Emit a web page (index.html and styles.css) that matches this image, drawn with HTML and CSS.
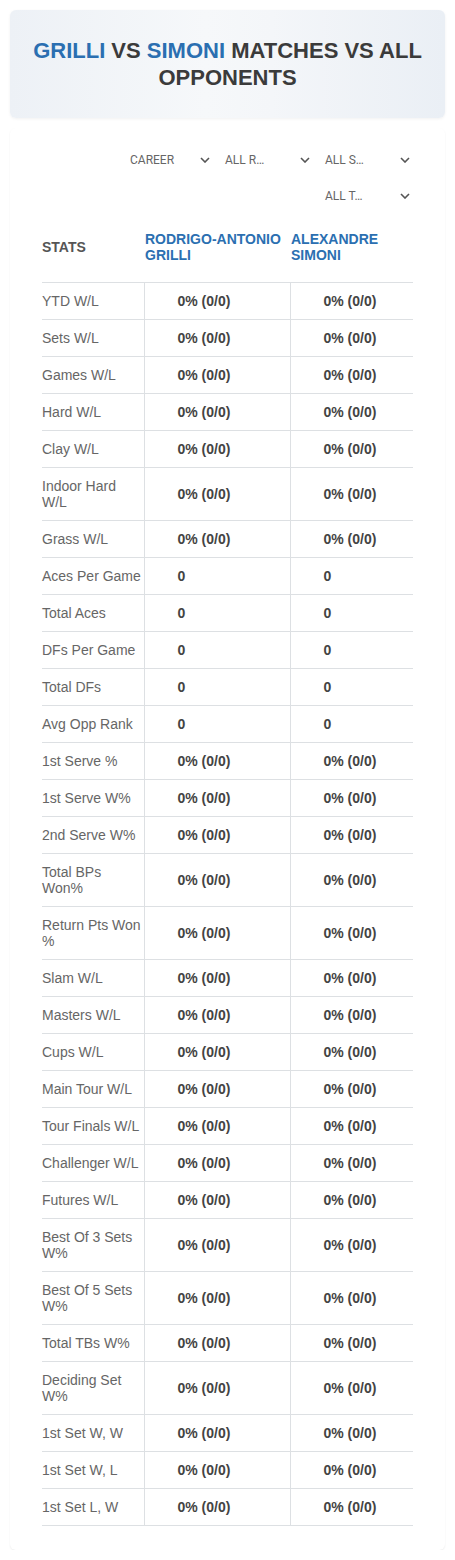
FILE: index.html
```html
<!DOCTYPE html>
<html>
<head>
<meta charset="utf-8">
<link rel="stylesheet" href="styles.css">
</head>
<body>
<header class="hero">
  <h1 class="title"><span class="name">Grilli</span> vs <span class="name">Simoni</span> Matches vs All Opponents</h1>
</header>
<section class="card">
  <div class="filters">
    <div class="select"><span>CAREER</span><svg class="chev" viewBox="0 0 10 6"><path d="M1 1l4 4 4-4" fill="none" stroke="#555" stroke-width="1.6"/></svg></div>
    <div class="select"><span>ALL R…</span><svg class="chev" viewBox="0 0 10 6"><path d="M1 1l4 4 4-4" fill="none" stroke="#555" stroke-width="1.6"/></svg></div>
    <div class="select"><span>ALL S…</span><svg class="chev" viewBox="0 0 10 6"><path d="M1 1l4 4 4-4" fill="none" stroke="#555" stroke-width="1.6"/></svg></div>
    <div class="select"><span>ALL T…</span><svg class="chev" viewBox="0 0 10 6"><path d="M1 1l4 4 4-4" fill="none" stroke="#555" stroke-width="1.6"/></svg></div>
  </div>
  <table class="stats">
    <colgroup><col class="c1"><col class="c2"><col class="c3"></colgroup>
    <thead>
      <tr><th class="lbl">STATS</th><th class="pl">RODRIGO-ANTONIO GRILLI</th><th class="pl">ALEXANDRE SIMONI</th></tr>
    </thead>
    <tbody>
      <tr><td>YTD W/L</td><td>0% (0/0)</td><td>0% (0/0)</td></tr>
      <tr><td>Sets W/L</td><td>0% (0/0)</td><td>0% (0/0)</td></tr>
      <tr><td>Games W/L</td><td>0% (0/0)</td><td>0% (0/0)</td></tr>
      <tr><td>Hard W/L</td><td>0% (0/0)</td><td>0% (0/0)</td></tr>
      <tr><td>Clay W/L</td><td>0% (0/0)</td><td>0% (0/0)</td></tr>
      <tr><td>Indoor Hard W/L</td><td>0% (0/0)</td><td>0% (0/0)</td></tr>
      <tr><td>Grass W/L</td><td>0% (0/0)</td><td>0% (0/0)</td></tr>
      <tr><td>Aces Per Game</td><td>0</td><td>0</td></tr>
      <tr><td>Total Aces</td><td>0</td><td>0</td></tr>
      <tr><td>DFs Per Game</td><td>0</td><td>0</td></tr>
      <tr><td>Total DFs</td><td>0</td><td>0</td></tr>
      <tr><td>Avg Opp Rank</td><td>0</td><td>0</td></tr>
      <tr><td>1st Serve %</td><td>0% (0/0)</td><td>0% (0/0)</td></tr>
      <tr><td>1st Serve W%</td><td>0% (0/0)</td><td>0% (0/0)</td></tr>
      <tr><td>2nd Serve W%</td><td>0% (0/0)</td><td>0% (0/0)</td></tr>
      <tr><td>Total BPs Won%</td><td>0% (0/0)</td><td>0% (0/0)</td></tr>
      <tr><td>Return Pts Won %</td><td>0% (0/0)</td><td>0% (0/0)</td></tr>
      <tr><td>Slam W/L</td><td>0% (0/0)</td><td>0% (0/0)</td></tr>
      <tr><td>Masters W/L</td><td>0% (0/0)</td><td>0% (0/0)</td></tr>
      <tr><td>Cups W/L</td><td>0% (0/0)</td><td>0% (0/0)</td></tr>
      <tr><td>Main Tour W/L</td><td>0% (0/0)</td><td>0% (0/0)</td></tr>
      <tr><td>Tour Finals W/L</td><td>0% (0/0)</td><td>0% (0/0)</td></tr>
      <tr><td>Challenger W/L</td><td>0% (0/0)</td><td>0% (0/0)</td></tr>
      <tr><td>Futures W/L</td><td>0% (0/0)</td><td>0% (0/0)</td></tr>
      <tr><td>Best Of 3 Sets W%</td><td>0% (0/0)</td><td>0% (0/0)</td></tr>
      <tr><td>Best Of 5 Sets W%</td><td>0% (0/0)</td><td>0% (0/0)</td></tr>
      <tr><td>Total TBs W%</td><td>0% (0/0)</td><td>0% (0/0)</td></tr>
      <tr><td>Deciding Set W%</td><td>0% (0/0)</td><td>0% (0/0)</td></tr>
      <tr><td>1st Set W, W</td><td>0% (0/0)</td><td>0% (0/0)</td></tr>
      <tr><td>1st Set W, L</td><td>0% (0/0)</td><td>0% (0/0)</td></tr>
      <tr><td>1st Set L, W</td><td>0% (0/0)</td><td>0% (0/0)</td></tr>
    </tbody>
  </table>
</section>
</body>
</html>
```
FILE: styles.css
```css
* { box-sizing: border-box; }
body {
  margin: 0;
  padding: 10px 10px 0;
  background: #fff;
  font-family: "Liberation Sans", Arial, sans-serif;
}
.hero {
  height: 108px;
  border-radius: 6px;
  background: linear-gradient(90deg, #edf1f6 0%, #f6f8fa 45%, #f4f6f9 60%, #eaeff5 100%);
  box-shadow: 0 1px 3px rgba(0,0,0,0.06);
  display: flex;
  align-items: center;
  justify-content: center;
  padding: 0 14px;
}
.title {
  margin: 0;
  text-align: center;
  font-size: 22px;
  line-height: 27px;
  font-weight: 700;
  text-transform: uppercase;
  color: #3b3b3b;
}
.name { color: #2b6fb1; }
.card {
  margin-top: 10px;
  padding: 17px 32px 24px;
  border-radius: 6px;
  box-shadow: 0 1px 2px rgba(0,0,0,0.07);
}
.filters {
  display: flex;
  flex-wrap: wrap;
  justify-content: flex-end;
  column-gap: 15px;
  row-gap: 6px;
  padding-right: 3px;
}
.select {
  width: 85px;
  height: 30px;
  display: flex;
  align-items: center;
  justify-content: space-between;
  font-family: Roboto, "Noto Sans", sans-serif;
  font-size: 12px;
  color: #666;
}
.select:first-child { width: 80px; }
.chev { width: 10px; height: 6px; margin-right: 0; }
.stats {
  margin-top: 14px;
  width: 100%;
  border-collapse: collapse;
  table-layout: fixed;
}
.c1 { width: 102px; }
.c2 { width: 146px; }
.stats th {
  text-align: left;
  font-size: 14px;
  line-height: 16px;
  font-weight: 700;
  padding: 6px 0 19px;
  border-bottom: 1px solid #dde0e3;
  vertical-align: middle;
}
.stats th.lbl { color: #555; }
.stats th.pl { color: #2b6fb1; padding-left: 1px; }
.stats td {
  font-size: 14px;
  line-height: 16px;
  padding: 10px 0 10px 33px;
  border-bottom: 1px solid #dde0e3;
  border-left: 1px solid #dde0e3;
  font-weight: 700;
  color: #444;
  vertical-align: middle;
}
.stats td:first-child {
  border-left: none;
  padding: 10px 2px 10px 0;
  font-weight: 400;
  color: #666;
}
```
